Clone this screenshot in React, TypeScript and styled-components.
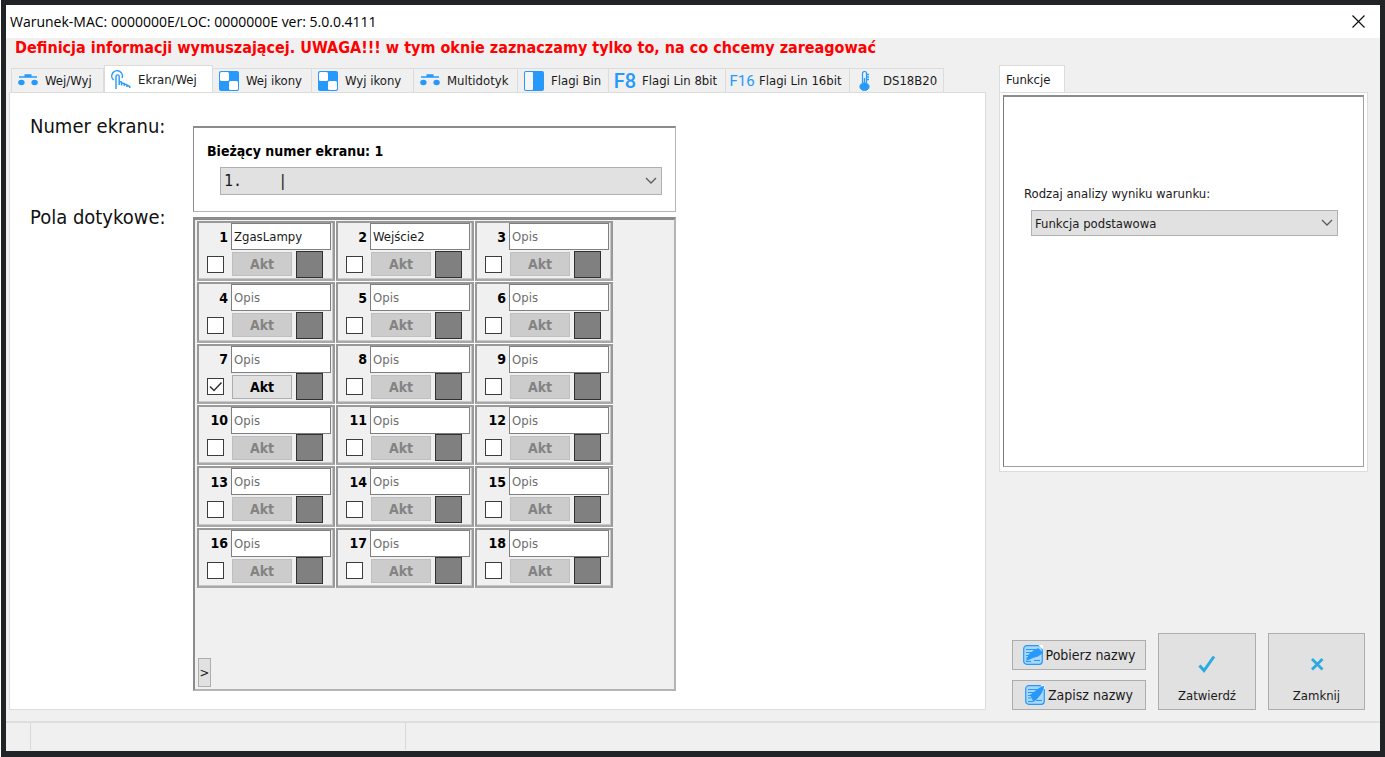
import React, { useState } from "react";
import styled, { createGlobalStyle } from "styled-components";

const ui = `"DejaVu Sans Condensed", "DejaVu Sans", sans-serif`;
const blue = "#2699fb";

const Global = createGlobalStyle`
  * { box-sizing: border-box; }
  html, body, #root { height: 100%; margin: 0; }
  body { background: #fff; font-family: "Noto Sans", sans-serif; font-size: 13px; color: #1a1a1a; }
  button, input, select { font: inherit; color: inherit; margin: 0; }
`;

const Window = styled.main`
  min-height: 100%;
  display: flex;
  flex-direction: column;
  margin-left: 1px;
  border: 5px solid #212326;
  border-bottom-width: 6px;
  background: #f0f0f0;
`;

const TitleBar = styled.header`
  display: flex;
  align-items: center;
  justify-content: space-between;
  height: 33px;
  padding: 0 15px 0 4px;
  background: #fff;
`;

const Title = styled.h1`
  margin: 0;
  font: 400 14px "Open Sans", "Noto Sans", sans-serif;
  color: #000;
`;

const CloseButton = styled.button`
  display: grid;
  padding: 0;
  border: 0;
  background: none;
`;

const Warning = styled.p`
  margin: 0;
  padding: 0 9px;
  height: 27px;
  line-height: 20px;
  font-family: ${ui};
  font-size: 16px;
  font-weight: 700;
  color: #f00;
  white-space: nowrap;
`;

const Body = styled.div`
  flex: 1;
  display: grid;
  grid-template-columns: minmax(0, 1fr) 369px;
  gap: 13px;
  padding: 0 12px 11px 3px;
`;

const TabArea = styled.section`
  display: flex;
  flex-direction: column;
`;

const TabList = styled.div`
  display: flex;
  align-items: flex-end;
  height: 27px;
  padding-left: 2px;
`;

const SideTabList = styled(TabList)`
  padding-left: 0;
`;

const Tab = styled.button<{ $active?: boolean; $width: number }>`
  flex: 0 0 ${(p) => p.$width}px;
  min-width: 0;
  display: flex;
  align-items: center;
  gap: 7px;
  height: ${(p) => (p.$active ? 28 : 24)}px;
  margin-bottom: ${(p) => (p.$active ? -1 : 0)}px;
  padding: 0 0 0 6px;
  border: 1px solid #dcdcdc;
  border-bottom: 0;
  border-left-width: ${(p) => (p.$active ? 1 : 0)}px;
  background: ${(p) => (p.$active ? "#fff" : "#f0f0f0")};
  font-family: ${ui};
  font-size: 13px;
  white-space: nowrap;
  &:first-child { border-left-width: 1px; }
`;

const TabIcon = styled.span`
  flex: 0 0 20px;
  width: 20px;
  min-width: 0;
  display: flex;
  align-items: center;
  justify-content: center;
`;

const Digits = styled.b<{ $size: number; $weight: number }>`
  font: ${(p) => p.$weight} ${(p) => p.$size}px/20px Roboto, sans-serif;
  color: ${blue};
`;

const Panel = styled.div`
  flex: 1;
  display: grid;
  grid-template-columns: 163px 483px;
  grid-template-rows: auto 1fr;
  align-items: start;
  row-gap: 5px;
  padding: 33px 20px 18px 20px;
  border: 1px solid #dcdcdc;
  background: #fff;
`;

const Caption = styled.h2`
  margin: -12px 0 0;
  font: 400 20px/24px ${ui};
  color: #111;
`;

const ScreenBox = styled.div`
  height: 86px;
  padding: 14px 13px 0;
  border: 1px solid #b4b4b4;
  border-top: 2px solid #8c8c8c;
  border-left-color: #8c8c8c;
`;

const ScreenLabel = styled.label`
  display: block;
  line-height: 18px;
  font-family: ${ui};
  font-size: 14px;
  font-weight: 700;
  color: #000;
`;

const SelectWrap = styled.div<{ $indent: number; $right: number }>`
  display: grid;
  align-items: center;
  margin: 7px ${(p) => p.$right}px 0 ${(p) => p.$indent}px;
  & > * { grid-area: 1 / 1; }
  & > svg { justify-self: end; margin-right: 5px; pointer-events: none; }
`;

const Select = styled.select<{ $mono?: boolean }>`
  appearance: none;
  width: 100%;
  height: ${(p) => (p.$mono ? 28 : 26)}px;
  padding: 0 24px 0 3px;
  border: 1px solid #b0b0b0;
  border-radius: 0;
  background: #e1e1e1;
  font-family: ${(p) => (p.$mono ? `"DejaVu Sans Mono", monospace` : ui)};
  font-size: ${(p) => (p.$mono ? 15 : 13)}px;
`;

const TouchBox = styled.div`
  display: flex;
  flex-direction: column;
  justify-content: space-between;
  align-items: flex-start;
  height: 100%;
  padding: 1px 0 2px 2px;
  border: 2px solid #b4b4b4;
  border-top: 3px solid #8c8c8c;
  border-left-color: #8c8c8c;
  background: #f0f0f0;
`;

const FieldGrid = styled.div`
  display: grid;
  grid-template-columns: repeat(3, 138px);
  grid-template-rows: repeat(6, 1fr);
  gap: 1px;
  height: 367px;
  background: #fff;
`;

const Cell = styled.div`
  display: grid;
  grid-template-columns: 32px 61px 1fr;
  grid-template-rows: 27px 28px;
  align-items: center;
  border: 2px solid #999;
  border-bottom-color: #a8a8a8;
  box-shadow: inset -1px -1px #c8c8c8;
  background: #f0f0f0;
`;

const Num = styled.label`
  padding-right: 3px;
  text-align: right;
  font-family: ${ui};
  font-size: 14px;
  font-weight: 700;
  color: #000;
`;

const Name = styled.input`
  grid-column: 2 / 4;
  width: 100px;
  height: 27px;
  padding: 0 2px;
  border: 1px solid #7f7f7f;
  background: #fff;
  font-family: ${ui};
  font-size: 13px;
  &::placeholder { color: #6d6d6d; opacity: 1; }
`;

const Tick = styled.label`
  display: grid;
  justify-self: start;
  margin-left: 8px;
  & > * { grid-area: 1 / 1; }
  & > svg { pointer-events: none; }
`;

const TickInput = styled.input`
  appearance: none;
  width: 17px;
  height: 17px;
  border: 1px solid #3c3c3c;
  background: #fff;
`;

const Act = styled.button`
  width: 60px;
  height: 24px;
  margin-left: 1px;
  padding: 0;
  border: 1px solid #adadad;
  background: #e1e1e1;
  font-family: ${ui};
  font-size: 14px;
  font-weight: 700;
  color: #000;
  &:disabled { border-color: #bfbfbf; background: #ccc; color: #838383; }
`;

const Swatch = styled.span`
  width: 27px;
  height: 27px;
  margin-left: 4px;
  border: 1px solid #303030;
  background: #808080;
`;

const NextButton = styled.button`
  width: 13px;
  height: 29px;
  margin-left: 1px;
  padding: 0;
  border: 1px solid #adadad;
  background: #e1e1e1;
  font-family: ${ui};
  font-size: 13px;
`;

const Side = styled.aside`
  display: flex;
  flex-direction: column;
  justify-content: space-between;
`;

const FunctionPanel = styled.div`
  height: 380px;
  padding: 2px 3px 4px 3px;
  border: 1px solid #dcdcdc;
  background: #fff;
`;

const FunctionBox = styled.div`
  height: 100%;
  padding: 88px 20px 0;
  border: 1px solid #a0a0a0;
  border-top: 2px solid #8c8c8c;
  border-left-color: #7a7a7a;
`;

const FieldLabel = styled.label`
  display: block;
  line-height: 18px;
  font-family: ${ui};
  font-size: 13px;
`;

const Actions = styled.div`
  display: grid;
  grid-template-columns: 134px 98px 97px;
  gap: 10px;
  padding: 0 3px 0 13px;
  justify-content: space-between;
`;

const NameActions = styled.div`
  display: flex;
  flex-direction: column;
  justify-content: flex-end;
  gap: 10px;
`;

const SmallButton = styled.button`
  display: flex;
  align-items: center;
  justify-content: center;
  gap: 3px;
  height: 30px;
  padding: 0;
  border: 1px solid #adadad;
  background: #e1e1e1;
  font-family: ${ui};
  font-size: 14px;
`;

const BigButton = styled.button`
  display: flex;
  flex-direction: column;
  align-items: center;
  justify-content: flex-end;
  gap: 15px;
  height: 77px;
  padding: 0 0 6px;
  border: 1px solid #adadad;
  background: #e1e1e1;
  font-family: ${ui};
  font-size: 13px;
`;

const StatusBar = styled.footer`
  display: grid;
  grid-template-columns: 25px 375px 1fr;
  height: 30px;
  padding-bottom: 1px;
  border-top: 2px solid #dedede;
`;

const StatusCell = styled.span`
  border-right: 1px solid #d8d8d8;
`;

const Chevron = () => (
  <svg width="12" height="8" viewBox="0 0 12 8" fill="none" stroke="#5c5c5c" strokeWidth="1.3">
    <path d="M1 1l5 5 5-5" />
  </svg>
);

const Switches = () => (
  <svg width="20" height="20" viewBox="0 0 20 20" fill={blue}>
    <path d="M6.500 3.200h7v2h5.500v1.600H1V5.200h5.500z" />
    <ellipse cx="3.400" cy="11.500" rx="3.200" ry="2.800" />
    <ellipse cx="16.600" cy="11.500" rx="3.200" ry="2.800" />
  </svg>
);

const Touch = () => (
  <svg width="20" height="22" viewBox="0 0 20 22" fill="none" stroke={blue} strokeWidth="1.400">
    <path d="M2.600 11A5.300 5.300 0 1 1 11 9" />
    <path d="M5 20V7.500a1.600 1.600 0 0 1 3.200 0V16M8.200 12.500l2.300.5v3.500M10.500 14l2.700.6V17M13.200 15l2.700.7V18M16 16.500l2.700.8V19" />
  </svg>
);

const Squares = () => (
  <svg width="20" height="20" viewBox="0 0 20 20">
    <rect width="20" height="20" rx="2" fill={blue} />
    <rect x="1" y="1" width="9" height="9" rx="1.500" fill="#fff" />
    <rect x="10" y="10" width="9" height="9" rx="1.500" fill="#fff" />
  </svg>
);

const Half = () => (
  <svg width="20" height="20" viewBox="0 0 20 20">
    <rect width="20" height="20" rx="2" fill={blue} />
    <rect x="1" y="1" width="8" height="18" rx="1" fill="#f6f6f6" />
  </svg>
);

const Thermo = () => (
  <svg width="20" height="20" viewBox="0 0 20 20" fill="none" stroke={blue}>
    <path d="M6.500 12V2.500a2 2 0 0 1 4 0V12" strokeWidth="1.200" />
    <path d="M8.500 7v7M11 3.500h2M11 6h2M11 8.500h2" strokeWidth="1.400" />
    <ellipse cx="8.500" cy="15.700" rx="4.600" ry="3.800" fill={blue} />
  </svg>
);

const Note = ({ save }: { save?: boolean }) => (
  <svg width="20" height="20" viewBox="0 0 20 20">
    <rect x=".7" y=".7" width="18.600" height="18.600" rx="3" fill="#a9d6fd" stroke={blue} strokeWidth="1.200" />
    <path d="M3 4.500h9M3 7.500h6M3 10.500h4M3 13h3M11 15.500h6M3 16.500h5" stroke={blue} />
    <path d="M15.500 0H20v4.500z" fill="#fff" />
    {save ? (
      <path d="M19.500.5c-6 2-10 6-12.500 8l-2 1.500 3.500 7 3-2.500c4-4 6-7 8-14z" fill={blue} />
    ) : (
      <path d="M3 16l3-7 6-4.800 3.500-1L20 8l-5 3.500-4.500 1.300z" fill={blue} />
    )}
  </svg>
);

const tabs = [
  { label: "Wej/Wyj", width: 93, icon: <Switches /> },
  { label: "Ekran/Wej", width: 109, icon: <Touch /> },
  { label: "Wej ikony", width: 99, icon: <Squares /> },
  { label: "Wyj ikony", width: 102, icon: <Squares /> },
  { label: "Multidotyk", width: 104, icon: <Switches /> },
  { label: "Flagi Bin", width: 91, icon: <Half /> },
  { label: "Flagi Lin 8bit", width: 117, icon: <Digits $size={20} $weight={500}>F8</Digits> },
  { label: "Flagi Lin 16bit", width: 124, icon: <Digits $size={15} $weight={400}>F16</Digits> },
  { label: "DS18B20", width: 94, icon: <Thermo /> },
];

const initialNames: Record<number, string> = { 1: "ZgasLampy", 2: "Wejście2" };

function TouchField({ n }: { n: number }) {
  const [on, setOn] = useState(n === 7);
  return (
    <Cell>
      <Num htmlFor={`name-${n}`}>{n}</Num>
      <Name id={`name-${n}`} placeholder="Opis" defaultValue={initialNames[n] ?? ""} />
      <Tick>
        <TickInput
          type="checkbox"
          aria-label={`Pole ${n}`}
          checked={on}
          onChange={(e) => setOn(e.target.checked)}
        />
        {on && (
          <svg width="17" height="17" viewBox="0 0 17 17" fill="none" stroke="#333" strokeWidth="1.500">
            <path d="M3 8.500l4 4 7.500-8" />
          </svg>
        )}
      </Tick>
      <Act type="button" disabled={!on}>Akt</Act>
      <Swatch />
    </Cell>
  );
}

export default function App() {
  return (
    <>
      <Global />
      <Window>
        <TitleBar>
          <Title>Warunek-MAC: 0000000E/LOC: 0000000E ver: 5.0.0.4111</Title>
          <CloseButton type="button" aria-label="Zamknij okno">
            <svg width="13" height="13" viewBox="0 0 13 13" stroke="#111" strokeWidth="1.200">
              <path d="M.5.5l12 12M12.500.5l-12 12" />
            </svg>
          </CloseButton>
        </TitleBar>
        <Warning>
          Definicja informacji wymuszającej. UWAGA!!! w tym oknie zaznaczamy tylko to, na co chcemy zareagować
        </Warning>
        <Body>
          <TabArea>
            <TabList role="tablist">
              {tabs.map((t, i) => (
                <Tab key={t.label} type="button" role="tab" aria-selected={i === 1} $active={i === 1} $width={t.width}>
                  <TabIcon>{t.icon}</TabIcon>
                  {t.label}
                </Tab>
              ))}
            </TabList>
            <Panel role="tabpanel">
              <Caption>Numer ekranu:</Caption>
              <ScreenBox>
                <ScreenLabel htmlFor="screen">Bieżący numer ekranu: 1</ScreenLabel>
                <SelectWrap $indent={13} $right={0}>
                  <Select id="screen" $mono>
                    <option>{"1.\u00a0\u00a0\u00a0\u00a0|"}</option>
                  </Select>
                  <Chevron />
                </SelectWrap>
              </ScreenBox>
              <Caption>Pola dotykowe:</Caption>
              <TouchBox>
                <FieldGrid>
                  {Array.from({ length: 18 }, (_, i) => (
                    <TouchField key={i} n={i + 1} />
                  ))}
                </FieldGrid>
                <NextButton type="button">&gt;</NextButton>
              </TouchBox>
            </Panel>
          </TabArea>
          <Side>
            <TabArea>
              <SideTabList role="tablist">
                <Tab type="button" role="tab" aria-selected $active $width={66}>Funkcje</Tab>
              </SideTabList>
              <FunctionPanel>
                <FunctionBox>
                  <FieldLabel htmlFor="analysis">Rodzaj analizy wyniku warunku:</FieldLabel>
                  <SelectWrap $indent={7} $right={5}>
                    <Select id="analysis">
                      <option>Funkcja podstawowa</option>
                    </Select>
                    <Chevron />
                  </SelectWrap>
                </FunctionBox>
              </FunctionPanel>
            </TabArea>
            <Actions>
              <NameActions>
                <SmallButton type="button"><Note />Pobierz nazwy</SmallButton>
                <SmallButton type="button"><Note save />Zapisz nazwy</SmallButton>
              </NameActions>
              <BigButton type="button">
                <svg width="18" height="18" viewBox="0 0 18 18" fill="none" stroke="#29abe2" strokeWidth="3">
                  <path d="M1.500 10.500l4.500 5L16 1.500" />
                </svg>
                Zatwierdź
              </BigButton>
              <BigButton type="button">
                <svg width="18" height="18" viewBox="0 0 18 18" fill="none" stroke="#29abe2" strokeWidth="2.800">
                  <path d="M4 4l10.500 10.500M14.500 4L4 14.500" />
                </svg>
                Zamknij
              </BigButton>
            </Actions>
          </Side>
        </Body>
        <StatusBar>
          <StatusCell />
          <StatusCell />
        </StatusBar>
      </Window>
    </>
  );
}
